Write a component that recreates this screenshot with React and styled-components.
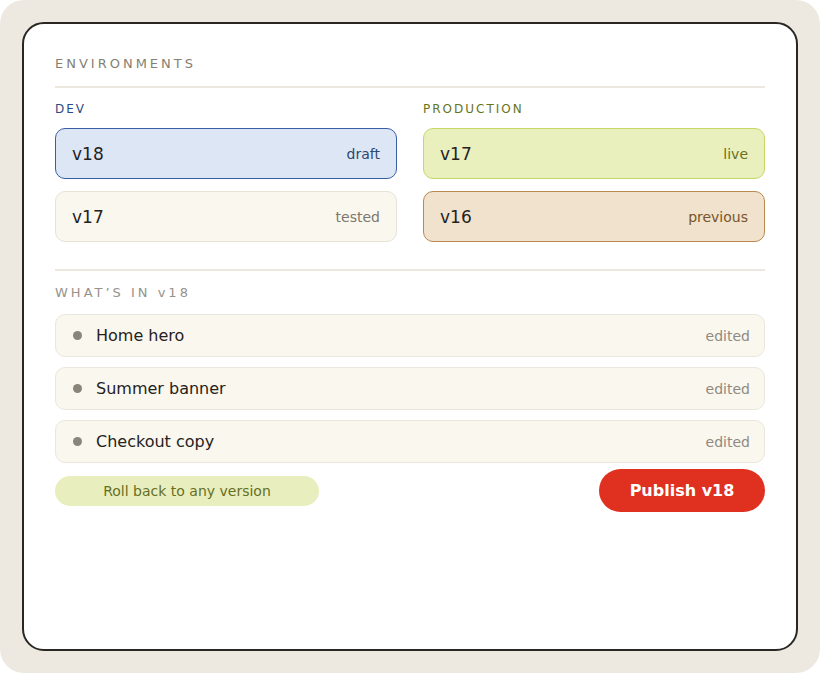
import React from "react";
import styled, { createGlobalStyle } from "styled-components";

const GlobalStyle = createGlobalStyle`
  body {
    margin: 0;
    background: #fff;
    font-family: "DejaVu Sans", "Liberation Sans", sans-serif;
  }
`;

const environments = [
  {
    name: "DEV",
    tone: "dev",
    versions: [
      { v: "v18", note: "draft", kind: "draft" },
      { v: "v17", note: "tested", kind: "plain" },
    ],
  },
  {
    name: "PRODUCTION",
    tone: "prod",
    versions: [
      { v: "v17", note: "live", kind: "live" },
      { v: "v16", note: "previous", kind: "previous" },
    ],
  },
];

const changes = ["Home hero", "Summer banner", "Checkout copy"];

const kinds = {
  draft: { bg: "#dde6f5", border: "#3a5ea6", note: "#2d4670" },
  plain: { bg: "#faf7ef", border: "#e8e3d5", note: "#7d786c" },
  live: { bg: "#e9efbd", border: "#c5d865", note: "#69731e" },
  previous: { bg: "#f0e2cc", border: "#b88a50", note: "#7a5428" },
};

const App = () => (
  <>
    <GlobalStyle />
    <Frame>
      <Card>
        <SectionTitle>ENVIRONMENTS</SectionTitle>
        <Divider $top={14} $bottom={14} />
        <EnvGrid>
          {environments.map((env) => (
            <EnvColumn key={env.name}>
              <EnvLabel $tone={env.tone}>{env.name}</EnvLabel>
              {env.versions.map((ver) => (
                <VersionBox key={ver.v} $kind={ver.kind}>
                  <VersionName>{ver.v}</VersionName>
                  <VersionNote $kind={ver.kind}>{ver.note}</VersionNote>
                </VersionBox>
              ))}
            </EnvColumn>
          ))}
        </EnvGrid>
        <Divider $top={27} $bottom={14} />
        <SectionTitle $small>WHAT’S IN v18</SectionTitle>
        <ChangeList>
          {changes.map((c) => (
            <ChangeRow key={c}>
              <Dot />
              <ChangeName>{c}</ChangeName>
              <ChangeState>edited</ChangeState>
            </ChangeRow>
          ))}
        </ChangeList>
        <Footer>
          <RollbackPill>Roll back to any version</RollbackPill>
          <PublishButton>Publish v18</PublishButton>
        </Footer>
      </Card>
    </Frame>
  </>
);

export default App;

const Frame = styled.div`
  box-sizing: border-box;
  width: 820px;
  height: 673px;
  padding: 22px;
  background: #ede9e0;
  border-radius: 24px;
`;

const Card = styled.div`
  box-sizing: border-box;
  height: 100%;
  background: #fff;
  border: 2px solid #2a2622;
  border-radius: 22px;
  padding: 32px 31px;
  display: flex;
  flex-direction: column;
`;

const SectionTitle = styled.div`
  font-size: 13px;
  line-height: 16px;
  letter-spacing: 3px;
  color: ${(p) => (p.$small ? "#97928a" : "#857f72")};
  margin-bottom: ${(p) => (p.$small ? "13px" : "0")};
`;

const Divider = styled.div`
  height: 2px;
  background: #ece8df;
  margin-top: ${(p) => p.$top}px;
  margin-bottom: ${(p) => p.$bottom}px;
`;

const EnvGrid = styled.div`
  display: grid;
  grid-template-columns: 1fr 1fr;
  gap: 26px;
`;

const EnvColumn = styled.div`
  display: flex;
  flex-direction: column;
  gap: 12px;
`;

const EnvLabel = styled.div`
  font-size: 12px;
  line-height: 15px;
  letter-spacing: 2px;
  color: ${(p) => (p.$tone === "dev" ? "#2c4a86" : "#66741c")};
  margin-bottom: -1px;
`;

const VersionBox = styled.div`
  box-sizing: border-box;
  height: 51px;
  display: flex;
  align-items: center;
  justify-content: space-between;
  padding: 0 16px 0 16px;
  border-radius: 10px;
  background: ${(p) => kinds[p.$kind].bg};
  border: 1.5px solid ${(p) => kinds[p.$kind].border};
`;

const VersionName = styled.span`
  font-size: 17px;
  color: #25221d;
`;

const VersionNote = styled.span`
  font-size: 14px;
  color: ${(p) => kinds[p.$kind].note};
`;

const ChangeList = styled.div`
  display: flex;
  flex-direction: column;
  gap: 10px;
`;

const ChangeRow = styled.div`
  box-sizing: border-box;
  height: 43px;
  display: flex;
  align-items: center;
  padding: 0 14px 0 17px;
  background: #faf7ef;
  border: 1.5px solid #ebe7dc;
  border-radius: 10px;
`;

const Dot = styled.span`
  width: 9px;
  height: 9px;
  border-radius: 50%;
  background: #8a857a;
  margin-right: 14px;
`;

const ChangeName = styled.span`
  flex: 1;
  font-size: 16px;
  color: #25221d;
`;

const ChangeState = styled.span`
  font-size: 14px;
  color: #8f8a80;
`;

const Footer = styled.div`
  display: flex;
  align-items: center;
  justify-content: space-between;
  margin-top: 6px;
`;

const RollbackPill = styled.div`
  width: 264px;
  height: 30px;
  border-radius: 15px;
  background: #e9eebe;
  color: #66701f;
  font-size: 14px;
  display: flex;
  align-items: center;
  justify-content: center;
`;

const PublishButton = styled.button`
  width: 166px;
  height: 43px;
  border: none;
  border-radius: 22px;
  background: #e0301f;
  color: #fff;
  font-family: "DejaVu Sans", sans-serif;
  font-size: 16px;
  font-weight: bold;
  cursor: pointer;
`;
